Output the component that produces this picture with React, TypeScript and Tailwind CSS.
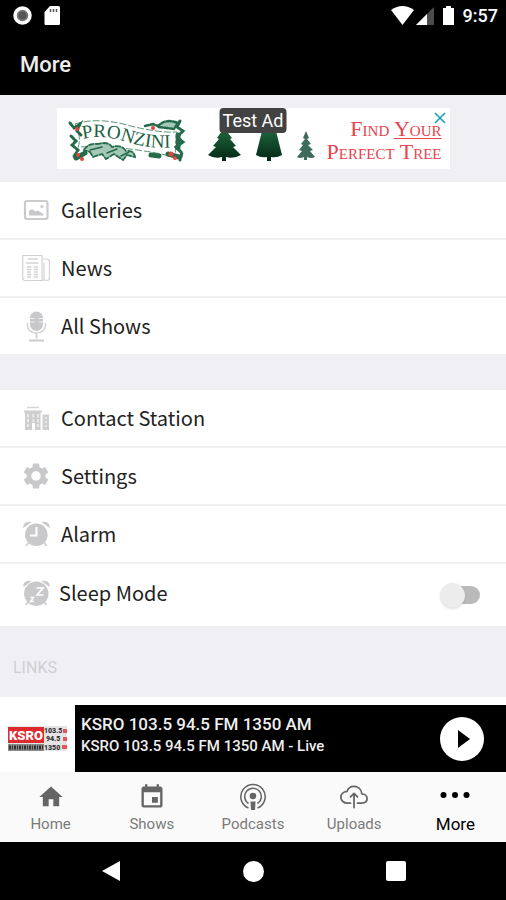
import React, { useState } from 'react';
import { MdHome, MdEvent, MdSettings } from 'react-icons/md';
import { IoCloudUploadOutline } from 'react-icons/io5';

const iconClass = 'h-7 w-7 shrink-0';

function GalleryIcon() {
  return (
    <svg viewBox="0 0 28 28" className={iconClass} aria-hidden="true">
      <rect x="3" y="5" width="22.500" height="18" rx="2" fill="none" stroke="#cbcbcd" strokeWidth="2.200" />
      <path d="M7 19.500V15l3-2 3.500 2.500 2.500-1 5.500 3.500v1.500z" fill="#c8c8ca" />
      <circle cx="20" cy="10.500" r="1.700" fill="#d3d3d5" />
    </svg>
  );
}

function NewsIcon() {
  return (
    <svg viewBox="0 0 28 28" className={iconClass} aria-hidden="true" fill="none" stroke="#d2d2d4">
      <path d="M.7 1.500h19.300v23q0 2 2 2H3.200q-2.500 0-2.500-2.500z" strokeWidth="1.200" />
      <path d="M20.500 5h4q3 0 3 3v16q0 2.500-2.800 2.500T22 24V8.500" strokeWidth="1.200" />
      <path d="M6 5h10M4 9h12.500" strokeWidth="1.400" />
      <path d="M5 13h4.500M11.500 13h4.500M5 15.500h4.500M11.500 15.500h4.500M5 18h4M12 18h4M5 20.500h4.500M11.500 20.500h4.500M5 23h4M11.500 23h4.500" strokeWidth="1.300" />
    </svg>
  );
}

function MicIcon() {
  return (
    <svg viewBox="0 0 28 32" className="h-8 w-7 shrink-0" aria-hidden="true">
      <rect x="8" y="1.500" width="13" height="19.500" rx="6.500" fill="#c8c8ca" />
      <path d="M8 8.500h4.500M16.500 8.500h4.500M8 12h4.500M16.500 12h4.500" stroke="#eee" strokeWidth="1" />
      <path d="M5.500 13v2.500a9 7.500 0 0 0 18 0V13" fill="none" stroke="#d4d4d6" strokeWidth="1.600" />
      <path d="M14.500 23v5.500" stroke="#d0d0d2" strokeWidth="1.800" />
      <path d="M7 30.500h15" stroke="#cbcbcd" strokeWidth="2" />
    </svg>
  );
}

function BuildingIcon() {
  return (
    <svg viewBox="0 0 28 28" className={iconClass} aria-hidden="true">
      <path d="M5 3.500h12" stroke="#d4d4d6" strokeWidth="1.500" />
      <path d="M2 6.500h18v2h-1.500V26h-5.500v-7h-3v7H3V8.500H2z" fill="#cecece" />
      <path d="M6 10v13M11.300 10v8M16 10v13" stroke="#e9e9e9" strokeWidth="2" strokeDasharray="3.500 1.500" />
      <path d="M20.500 10.500h6.500V26h-6.500z" fill="#d0d0d2" />
      <path d="M23.700 13v11" stroke="#e9e9e9" strokeWidth="2" strokeDasharray="2 2" />
    </svg>
  );
}

function ClockIcon({ sleep = false }: { sleep?: boolean }) {
  return (
    <svg viewBox="0 0 28 28" className={iconClass} aria-hidden="true">
      <path d="M1.500 8C.5 4 4 .5 9.500 2z M27.500 8c1-4-2.500-7.500-8-6z" fill="#cacacc" />
      <path d="M6.500 22.500l-2.500 3.500M22 22.500l2.500 3.500" stroke="#cfcfd1" strokeWidth="1.800" />
      <circle cx="14.300" cy="14.700" r={sleep ? 12.2 : 11.3} fill="#c9c9cb" />
      {sleep ? (
        <g fill="none" stroke="#fff" strokeWidth="1.700">
          <path d="M14.500 9h6.500l-6 7h6.500" />
          <path d="M8.500 18.500h3l-3 4H12" strokeWidth="1.400" />
        </g>
      ) : (
        <path d="M14.500 7v8.500h-6.500" fill="none" stroke="#fff" strokeWidth="2" />
      )}
    </svg>
  );
}

function PodcastIcon() {
  return (
    <svg viewBox="0 0 28 28" className={iconClass} aria-hidden="true" fill="none" stroke="#656565" strokeWidth="1.500">
      <path d="M9.500 25A12.200 12.200 0 1 1 18.500 25" />
      <path d="M9.500 20.500A8.300 8.300 0 1 1 18.500 20.500" />
      <circle cx="14" cy="13" r="3.300" fill="#656565" stroke="none" />
      <path d="M11.500 18.500h5l-.5 8.500h-4z" fill="#656565" stroke="none" />
    </svg>
  );
}

function MoreIcon() {
  return (
    <svg viewBox="0 0 30 28" className="h-7 w-[30px] shrink-0" aria-hidden="true">
      <circle cx="3.500" cy="12" r="3" />
      <circle cx="15" cy="12" r="3" />
      <circle cx="26.500" cy="12" r="3" />
    </svg>
  );
}

function StatusBar() {
  return (
    <div className="flex h-8 items-center justify-between pl-3 pr-2 text-white">
      <div className="flex items-center gap-3">
        <svg viewBox="0 0 20 20" className="h-5 w-5" aria-hidden="true">
          <circle cx="10.500" cy="9.500" r="7.500" fill="#777" stroke="#fff" strokeWidth="3.500" />
          <circle cx="10.500" cy="9.500" r="4" fill="#555" />
        </svg>
        <svg viewBox="0 0 16 20" className="h-5 w-4" aria-hidden="true">
          <path d="M6 0h8.500q1.500 0 1.500 1.500v16q0 1.500-1.500 1.500h-13Q.5 19 .5 17.500V6z" fill="#fff" />
          <path d="M6.500 3v3M9.500 3v3M12.500 3v3" stroke="#555" strokeWidth="1.500" />
        </svg>
      </div>
      <div className="flex items-center">
        <svg viewBox="0 0 68 20" className="h-5 w-[68px]" aria-hidden="true">
          <path d="M0 4Q11.500-4 23 4L11.500 19z" fill="#fff" />
          <path d="M43 1v18H25z" fill="#4c4c4c" />
          <path d="M36 8v11H25z" fill="#fff" />
          <path d="M52 2h3V0h5v2h3v17H52z" fill="#fff" />
        </svg>
        <span className="pl-1 text-[18px] leading-6 font-medium">9:57</span>
      </div>
    </div>
  );
}

function Advert() {
  return (
    <div className="relative mx-auto flex h-[61px] max-w-[393px] items-center bg-white">
      <svg viewBox="0 0 262 61" className="h-[61px] w-[262px] shrink-0" aria-hidden="true">
        <defs>
          <path id="banner" d="M26 31Q45 26 70 34T122 39" />
          <linearGradient id="fir" x1="0" y1="0" x2="0" y2="1">
            <stop offset="0" stopColor="#1d6b3e" />
            <stop offset="1" stopColor="#052615" />
          </linearGradient>
        </defs>
        <path d="M18 16Q40 9 70 17T120 24L118 49Q88 42 62 40T21 39Q25 30 18 16z" fill="#fff" stroke="#5b9478" strokeWidth="1" strokeDasharray="7 2" />
        <g fill="none" stroke="#246b4a" strokeLinecap="round">
          <path d="M13 15l4 5 6-4-3 7 4 4M14 28l5 5-4 4 6 5-5 8M123 13l-3 6 6 4-6 6 6 5-7 5 6 6-2 7" strokeWidth="3" strokeDasharray="4 2" />
          <path d="M27 42q4-7 14-6 10-3 14 3 9-3 14 4 8-1 9 6l-8-2-4 5-9-6-8 5-4-5-9 3-3-5z" fill="#a5c7b6" strokeWidth="1.800" strokeDasharray="5 2" />
          <path d="M33 42l12-3M50 45l10-4M64 48l8-4" strokeWidth="1.500" />
          <path d="M88 18l8-2 5 2q8-8 20-3l-4 6-16-2" fill="#a5c7b6" strokeWidth="2.500" strokeDasharray="4 2" />
          <path d="M19 50l9-5M94 47l8 1M111 46l11 3M121 27v14" strokeWidth="5" strokeDasharray="3 2" />
        </g>
        <g fill="#e8433c">
          <circle cx="20" cy="21" r="2" />
          <circle cx="96" cy="20" r="2" />
          <circle cx="21" cy="47" r="2" />
          <circle cx="25" cy="51" r="2" />
          <circle cx="114" cy="46" r="2.500" />
          <circle cx="118" cy="50" r="2" />
        </g>
        <text fontSize="19" fill="#1e5f43" fontFamily="'Liberation Serif', serif">
          <textPath href="#banner">PRONZINI</textPath>
        </text>
        <g fill="url(#fir)">
          <path d="M167 20l8 10-2 1 6 7-3 1 8 8q-7 4-15 2v4h-4v-4q-8 2-14-2l8-8-3-1 6-7-2-1z" />
          <path d="M206 19h12l3 12 4 16q-5 3-11 2v4h-4v-4q-6 1-11-2l4-16z" />
        </g>
        <path d="M249 23l3 7-2 1 4 5-3 1 5 5-3 1 5 6q-4 2-8 0v3h-3v-3q-4 2-7 0l5-6-3-1 4-5-2-1 4-5-2-1z" fill="#3e6c5b" />
      </svg>
      <div className="flex-1 pt-[2px] pr-2 text-right font-['Liberation_Serif',serif] text-[22px] leading-[23px] whitespace-nowrap text-[#e8434d] [font-variant:small-caps]">
        <p>
          Find <span className="underline decoration-1 underline-offset-2">Your</span>
        </p>
        <p>Perfect Tree</p>
      </div>
      <span className="absolute top-0 left-1/2 -translate-x-1/2 rounded-sm bg-[#424242] px-[3px] text-[18px] leading-[25px] whitespace-nowrap text-white">
        Test Ad
      </span>
      <button type="button" aria-label="Close ad" className="absolute top-1 right-1">
        <svg viewBox="0 0 12 12" className="h-3 w-3" aria-hidden="true">
          <path d="M1 1l10 10M11 1L1 11" stroke="#239fba" strokeWidth="1.700" />
        </svg>
      </button>
    </div>
  );
}

function Row({ icon, label }: { icon: React.ReactNode; label: string }) {
  return (
    <li className="border-b-2 border-[#f1f1f3]">
      <a href="#" className="flex h-14 items-center gap-[11px] pl-[22px]">
        {icon}
        <span>{label}</span>
      </a>
    </li>
  );
}

function SleepRow() {
  const [on, setOn] = useState(false);
  return (
    <li>
      <label className="flex h-[62px] items-center gap-[9px] pr-[26px] pb-1 pl-[22px]">
        <ClockIcon sleep />
        <span className="flex-1">Sleep Mode</span>
        <span className="relative mt-1 flex h-7 w-10 items-center justify-end">
          <input
            type="checkbox"
            checked={on}
            onChange={() => setOn(!on)}
            className="peer h-[18px] w-8 appearance-none rounded-full bg-[#bababa] checked:bg-[#777]"
          />
          <span className="pointer-events-none absolute top-[2px] left-0 h-[25px] w-[25px] rounded-full bg-[#ececec] shadow-sm peer-checked:translate-x-4" />
        </span>
      </label>
    </li>
  );
}

function StationLogo() {
  return (
    <svg viewBox="0 0 60 26" className="h-[26px] w-[60px]" role="img" aria-label="KSRO">
      <rect x="0" y="0" width="59" height="25" fill="#e4e4e4" />
      <rect x="0" y="1" width="36" height="16" fill="#dd2c30" />
      <rect x="0" y="18" width="36" height="7" fill="#8a8a8a" />
      <path d="M1 21.500h34" stroke="#333" strokeWidth="4" strokeDasharray="2 1 1 1" />
      <g fontFamily="Roboto, sans-serif" fontWeight="900">
        <text x="1" y="14" fontSize="13" fill="#fff">KSRO</text>
        <g fontSize="7" fill="#333">
          <text x="36" y="7">103.5</text>
          <text x="38" y="15">94.5</text>
          <text x="36" y="24">1350</text>
        </g>
      </g>
      <path d="M55 5h4M55 13h4M54 21h5" stroke="#e2555a" strokeWidth="4" />
    </svg>
  );
}

function Player() {
  return (
    <section className="flex items-stretch bg-white">
      <div className="flex w-[75px] shrink-0 items-center pl-2">
        <StationLogo />
      </div>
      <div className="flex h-[67px] flex-1 items-center justify-between bg-black pr-[22px] pl-[6px] font-medium text-[#eee]">
        <div className="pb-[10px]">
          <p className="text-[17px] leading-6">KSRO 103.5 94.5 FM 1350 AM</p>
          <p className="text-[15px] leading-5">KSRO 103.5 94.5 FM 1350 AM - Live</p>
        </div>
        <button type="button" aria-label="Play" className="flex h-11 w-11 items-center justify-center rounded-full bg-white">
          <svg viewBox="0 0 12 18" className="ml-1 h-[18px] w-3" aria-hidden="true">
            <path d="M0 0l12 9L0 18z" />
          </svg>
        </button>
      </div>
    </section>
  );
}

function Tab({ icon, label, active = false }: { icon: React.ReactNode; label: string; active?: boolean }) {
  return (
    <a
      href="#"
      aria-current={active ? 'page' : undefined}
      className={
        active
          ? 'flex flex-1 flex-col items-center gap-[3px] text-[17px] leading-5 text-black'
          : 'flex flex-1 flex-col items-center gap-[3px] text-[15px] leading-5 text-[#7a7a7a]'
      }
    >
      {icon}
      <span>{label}</span>
    </a>
  );
}

export default function App() {
  return (
    <div className="flex min-h-screen flex-col bg-[#f0eff4] font-[Roboto,sans-serif]">
      <header className="bg-black">
        <StatusBar />
        <h1 className="h-[63px] pt-[21px] pl-5 text-[22px] leading-6 font-medium text-[#eee]">More</h1>
      </header>
      <main className="flex-1 font-['Noto_Sans_CJK_SC',sans-serif] text-[20px] leading-7 text-[#222]">
        <div className="py-[13px] font-[Roboto,sans-serif]">
          <Advert />
        </div>
        <ul className="bg-white">
          <Row icon={<GalleryIcon />} label="Galleries" />
          <Row icon={<NewsIcon />} label="News" />
          <Row icon={<MicIcon />} label="All Shows" />
        </ul>
        <ul className="mt-[34px] bg-white">
          <Row icon={<BuildingIcon />} label="Contact Station" />
          <Row icon={<MdSettings viewBox="2 2 20 20" className="h-7 w-7 shrink-0 p-px text-[#c9c9cb]" />} label="Settings" />
          <Row icon={<ClockIcon />} label="Alarm" />
          <SleepRow />
        </ul>
        <h2 className="h-[71px] pt-[30px] pl-[13px] font-[Roboto,sans-serif] text-[16px] leading-6 text-[#cfcfd2]">LINKS</h2>
        <div className="h-2 bg-white" />
      </main>
      <Player />
      <nav className="flex h-[70px] bg-[#fafafa] pt-[11px]">
        <Tab icon={<MdHome className="h-7 w-7 text-[#656565]" />} label="Home" />
        <Tab icon={<MdEvent className="h-7 w-7 text-[#656565]" />} label="Shows" />
        <Tab icon={<PodcastIcon />} label="Podcasts" />
        <Tab icon={<IoCloudUploadOutline className="h-7 w-7 text-[#656565]" />} label="Uploads" />
        <Tab icon={<MoreIcon />} label="More" active />
      </nav>
      <footer className="flex h-[58px] items-center justify-center gap-[122px] bg-black">
        <button type="button" aria-label="Back">
          <svg viewBox="0 0 20 22" className="h-[22px] w-5" aria-hidden="true">
            <path d="M19 1v20L1 11z" fill="#fff" />
          </svg>
        </button>
        <button type="button" aria-label="Home" className="h-[21px] w-[21px] rounded-full bg-white" />
        <button type="button" aria-label="Recent apps" className="h-5 w-5 rounded-[2px] bg-white" />
      </footer>
    </div>
  );
}
